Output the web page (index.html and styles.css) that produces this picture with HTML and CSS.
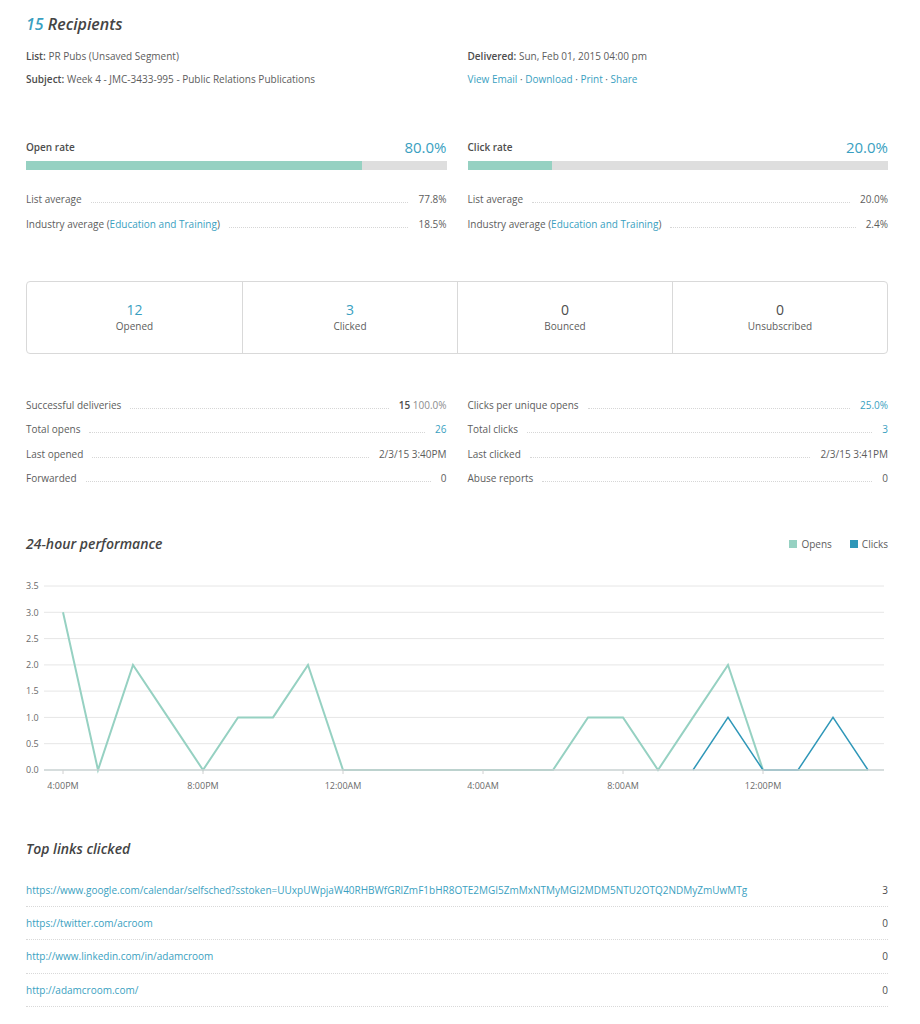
FILE: index.html
```html
<!DOCTYPE html>
<html lang="en">

<head>
    <meta charset="UTF-8">
    <meta name="viewport" content="width=device-width, initial-scale=1.0">
    <title>Campaign Report</title>
    <link rel="stylesheet" href="styles.css">
</head>

<body>
    <div class="report">
        <!-- Header -->
        <h1 class="report-title"><span class="count">15</span> Recipients</h1>

        <div class="meta">
            <div class="meta-col">
                <p><b>List:</b> PR Pubs (Unsaved Segment)</p>
                <p><b>Subject:</b> Week 4 - JMC-3433-995 - Public Relations Publications</p>
            </div>
            <div class="meta-col">
                <p><b>Delivered:</b> Sun, Feb 01, 2015 04:00 pm</p>
                <p><a href="#">View Email</a> · <a href="#">Download</a> · <a href="#">Print</a> · <a href="#">Share</a></p>
            </div>
        </div>

        <!-- Open / click rates -->
        <div class="rates">
            <div class="rate">
                <div class="rate-head">
                    <span class="rate-label">Open rate</span>
                    <span class="rate-value">80.0%</span>
                </div>
                <div class="bar"><div class="bar-fill" style="width: 80%"></div></div>
                <div class="line-row"><span>List average</span><span class="dots"></span><span>77.8%</span></div>
                <div class="line-row"><span>Industry average (<a href="#">Education and Training</a>)</span><span class="dots"></span><span>18.5%</span></div>
            </div>
            <div class="rate">
                <div class="rate-head">
                    <span class="rate-label">Click rate</span>
                    <span class="rate-value">20.0%</span>
                </div>
                <div class="bar"><div class="bar-fill" style="width: 20%"></div></div>
                <div class="line-row"><span>List average</span><span class="dots"></span><span>20.0%</span></div>
                <div class="line-row"><span>Industry average (<a href="#">Education and Training</a>)</span><span class="dots"></span><span>2.4%</span></div>
            </div>
        </div>

        <!-- Totals -->
        <div class="totals">
            <div class="total">
                <div class="total-num blue">12</div>
                <div class="total-label">Opened</div>
            </div>
            <div class="total">
                <div class="total-num blue">3</div>
                <div class="total-label">Clicked</div>
            </div>
            <div class="total">
                <div class="total-num">0</div>
                <div class="total-label">Bounced</div>
            </div>
            <div class="total">
                <div class="total-num">0</div>
                <div class="total-label">Unsubscribed</div>
            </div>
        </div>

        <div class="details">
            <div class="detail-col">
                <div class="line-row"><span>Successful deliveries</span><span class="dots"></span><span><b>15</b> <span class="muted">100.0%</span></span></div>
                <div class="line-row"><span>Total opens</span><span class="dots"></span><a href="#">26</a></div>
                <div class="line-row"><span>Last opened</span><span class="dots"></span><span>2/3/15 3:40PM</span></div>
                <div class="line-row"><span>Forwarded</span><span class="dots"></span><span>0</span></div>
            </div>
            <div class="detail-col">
                <div class="line-row"><span>Clicks per unique opens</span><span class="dots"></span><a href="#">25.0%</a></div>
                <div class="line-row"><span>Total clicks</span><span class="dots"></span><a href="#">3</a></div>
                <div class="line-row"><span>Last clicked</span><span class="dots"></span><span>2/3/15 3:41PM</span></div>
                <div class="line-row"><span>Abuse reports</span><span class="dots"></span><span>0</span></div>
            </div>
        </div>

        <!-- 24-hour chart -->
        <div class="section-head">
            <h2>24-hour performance</h2>
            <div class="legend">
                <span class="key"><i class="swatch opens"></i>Opens</span>
                <span class="key"><i class="swatch clicks"></i>Clicks</span>
            </div>
        </div>

        <svg class="chart" width="862" height="220" viewBox="0 0 862 220">
            <g class="grid">
                <line x1="18" y1="10" x2="858" y2="10" />
                <line x1="18" y1="36.3" x2="858" y2="36.3" />
                <line x1="18" y1="62.6" x2="858" y2="62.6" />
                <line x1="18" y1="88.9" x2="858" y2="88.9" />
                <line x1="18" y1="115.1" x2="858" y2="115.1" />
                <line x1="18" y1="141.4" x2="858" y2="141.4" />
                <line x1="18" y1="167.7" x2="858" y2="167.7" />
            </g>
            <g class="y-labels">
                <text x="0" y="13.3">3.5</text>
                <text x="0" y="39.6">3.0</text>
                <text x="0" y="65.9">2.5</text>
                <text x="0" y="92.2">2.0</text>
                <text x="0" y="118.4">1.5</text>
                <text x="0" y="144.7">1.0</text>
                <text x="0" y="171">0.5</text>
                <text x="0" y="197.3">0.0</text>
            </g>
            <polyline class="opens-line" points="37,36.3 72,194 107,88.9 142,141.4 177,194 212,141.4 247,141.4 282,88.9 317,194 352,194 387,194 422,194 457,194 492,194 527,194 562,141.4 597,141.4 632,194 667,141.4 702,88.9 737,194 772,194 807,194 842,194" />
            <polyline class="clicks-line" points="667,194 702,141.4 737,194 772,194 807,141.4 842,194" />
            <line class="axis" x1="18" y1="194" x2="858" y2="194" />
            <g class="ticks">
                <line x1="37" y1="194" x2="37" y2="198" />
                <line x1="177" y1="194" x2="177" y2="198" />
                <line x1="317" y1="194" x2="317" y2="198" />
                <line x1="457" y1="194" x2="457" y2="198" />
                <line x1="597" y1="194" x2="597" y2="198" />
                <line x1="737" y1="194" x2="737" y2="198" />
            </g>
            <g class="x-labels">
                <text x="37" y="213">4:00PM</text>
                <text x="177" y="213">8:00PM</text>
                <text x="317" y="213">12:00AM</text>
                <text x="457" y="213">4:00AM</text>
                <text x="597" y="213">8:00AM</text>
                <text x="737" y="213">12:00PM</text>
            </g>
        </svg>

        <!-- Links -->
        <h2 class="links-title">Top links clicked</h2>
        <div class="links">
            <div class="link-row"><a href="#">https://www.google.com/calendar/selfsched?sstoken=UUxpUWpjaW40RHBWfGRlZmF1bHR8OTE2MGI5ZmMxNTMyMGI2MDM5NTU2OTQ2NDMyZmUwMTg</a><span>3</span></div>
            <div class="link-row"><a href="#">https://twitter.com/acroom</a><span>0</span></div>
            <div class="link-row"><a href="#">http://www.linkedin.com/in/adamcroom</a><span>0</span></div>
            <div class="link-row"><a href="#">http://adamcroom.com/</a><span>0</span></div>
        </div>
    </div>
</body>

</html>
```

FILE: styles.css
```css
body {
    margin: 0;
    padding: 0;
    font-family: "Open Sans", sans-serif;
    font-size: 10px;
    color: #5d5d5d;
    background: #ffffff;
}

a {
    color: #3a9fc1;
    text-decoration: none;
}

b {
    font-weight: 600;
    color: #4d4d4d;
}

p {
    margin: 0;
}

.report {
    width: 862px;
    padding: 12px 0 0 26px;
}

.report-title {
    margin: 0;
    font-size: 16px;
    line-height: 24px;
    font-style: italic;
    font-weight: 600;
    color: #444;
}

.report-title .count {
    color: #3a9fc1;
}

.meta {
    display: grid;
    grid-template-columns: 1fr 1fr;
    column-gap: 21px;
    margin-top: 13px;
}

.meta-col p {
    line-height: 14px;
    margin-bottom: 9px;
}

/* rate bars */
.rates {
    display: grid;
    grid-template-columns: 1fr 1fr;
    column-gap: 21px;
    margin-top: 42px;
}

.rate-head {
    display: flex;
    justify-content: space-between;
    align-items: center;
    height: 20px;
}

.rate-label {
    font-weight: 600;
    color: #4d4d4d;
}

.rate-value {
    font-size: 15px;
    color: #3a9fc1;
}

.bar {
    height: 9px;
    margin: 4px 0 22px;
    background: #dedede;
}

.bar-fill {
    height: 100%;
    background: #96d1c2;
}

.line-row {
    display: flex;
    align-items: baseline;
    line-height: 14px;
    margin-bottom: 11px;
}

.dots {
    flex: 1;
    margin: 0 10px 0 9px;
    border-bottom: 1px dotted #d6d6d6;
}

.muted {
    color: #8c8c8c;
}

/* totals box */
.totals {
    display: grid;
    grid-template-columns: repeat(4, 1fr);
    margin-top: 39px;
    border: 1px solid #d9d9d9;
    border-radius: 4px;
}

.total {
    text-align: center;
    padding: 19px 0 20px;
    border-left: 1px solid #d9d9d9;
}

.total:first-child {
    border-left: none;
}

.total-num {
    font-size: 14px;
    line-height: 18px;
    color: #4d4d4d;
}

.total-num.blue {
    color: #3a9fc1;
}

.total-label {
    line-height: 14px;
}

.details {
    display: grid;
    grid-template-columns: 1fr 1fr;
    column-gap: 21px;
    margin-top: 44px;
}

.details .line-row {
    margin-bottom: 10.4px;
}

/* chart */
.section-head {
    display: flex;
    justify-content: space-between;
    align-items: center;
    margin-top: 38px;
}

.section-head h2,
.links-title {
    margin: 0;
    font-size: 14px;
    line-height: 20px;
    font-style: italic;
    font-weight: 600;
    color: #444;
}

.legend {
    display: flex;
    gap: 18px;
}

.key {
    display: flex;
    align-items: center;
    gap: 4px;
}

.swatch {
    width: 8px;
    height: 8px;
}

.swatch.opens {
    background: #96d1c2;
}

.swatch.clicks {
    background: #2f97b8;
}

.chart {
    display: block;
    margin-top: 22px;
}

.grid line {
    stroke: #e6e6e6;
    stroke-width: 1;
}

.axis {
    stroke: #c9d2d2;
    stroke-width: 1.5;
}

.ticks line {
    stroke: #d0d0d0;
    stroke-width: 1;
}

.y-labels text,
.x-labels text {
    font-family: "Open Sans", sans-serif;
    font-size: 9px;
    fill: #6a6a6a;
}

.x-labels text {
    text-anchor: middle;
}

.opens-line {
    fill: none;
    stroke: #96d1c2;
    stroke-width: 2;
    stroke-linejoin: miter;
}

.clicks-line {
    fill: none;
    stroke: #2f97b8;
    stroke-width: 1.5;
}

/* links */
.links-title {
    margin-top: 43px;
}

.links {
    margin-top: 15px;
}

.link-row {
    display: flex;
    justify-content: space-between;
    line-height: 14px;
    padding: 9px 0 9.4px;
    border-bottom: 1px dotted #d9d9d9;
}

.link-row span {
    color: #4d4d4d;
}
```
